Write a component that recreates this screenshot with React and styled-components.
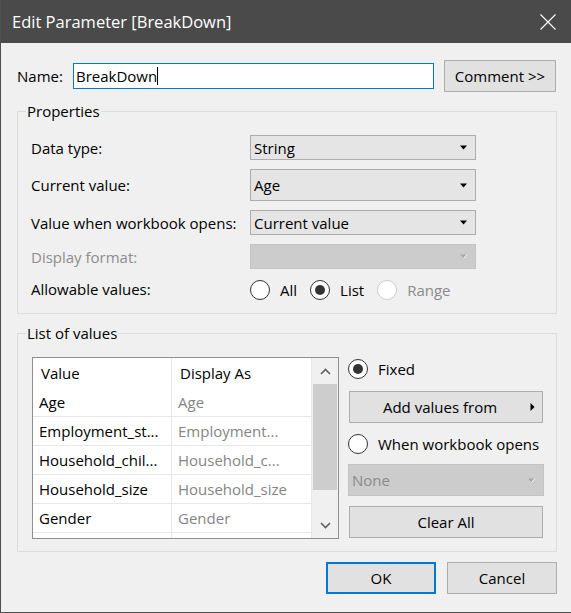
import React from 'react';
import styled, { createGlobalStyle } from 'styled-components';

const GlobalStyle = createGlobalStyle`
  html, body {
    margin: 0;
    padding: 0;
    background: #f0f0f0;
  }
  body {
    font-family: "Open Sans", "Noto Sans", sans-serif;
    font-size: 15px;
    color: #000;
  }
`;

const Window = styled.div`
  width: 571px;
  height: 613px;
  box-sizing: border-box;
  border-left: 1px solid #4f4f4f;
  border-bottom: 1px solid #4f4f4f;
  background: #f0f0f0;
  display: flex;
  flex-direction: column;
`;

const TitleBar = styled.div`
  height: 43px;
  flex: none;
  background: #4a4a4a;
  color: #fff;
  display: flex;
  align-items: center;
  justify-content: space-between;
  padding: 0 15px 0 11px;
  font-size: 16.5px;
`;

const Body = styled.div`
  padding: 17px 14px 0 16px;
`;

const NameRow = styled.div`
  display: flex;
  align-items: center;
  height: 32px;
`;

const NameLabel = styled.label`
  width: 56px;
  flex: none;
`;

const TextInput = styled.div`
  width: 361px;
  height: 26px;
  box-sizing: border-box;
  border: 1px solid #0078d7;
  background: #fff;
  padding-left: 2px;
  display: flex;
  align-items: center;
`;

const Caret = styled.span`
  display: inline-block;
  width: 1px;
  height: 18px;
  background: #000;
`;

const Button = styled.button`
  box-sizing: border-box;
  width: ${(p) => p.$width || 110}px;
  height: 32px;
  margin: 0;
  margin-left: ${(p) => p.$indent || 0}px;
  padding: 0;
  background: #e1e1e1;
  border: ${(p) => (p.$default ? '2px solid #0078d7' : '1px solid #adadad')};
  font: inherit;
  color: #000;
  display: flex;
  align-items: center;
  justify-content: center;
`;

const ButtonText = styled.span`
  flex: 1;
  text-align: center;
`;

const Group = styled.fieldset`
  margin: ${(p) => p.$gap}px 0 0;
  padding: 0;
  min-width: 0;
  border: 1px solid #dcdcdc;
`;

const Legend = styled.legend`
  margin-left: 8px;
  padding: 0 1px;
  line-height: 20px;
`;

const PropGrid = styled.div`
  display: grid;
  grid-template-columns: 219px 226px;
  row-gap: 9px;
  align-items: center;
  padding: 14px 0 13px 13px;
`;

const FieldLabel = styled.div`
  color: ${(p) => (p.$disabled ? '#8d8d8d' : '#000')};
`;

const Select = styled.div`
  box-sizing: border-box;
  width: ${(p) => p.$width || 226}px;
  height: ${(p) => p.$height || 25}px;
  border: 1px solid ${(p) => (p.$disabled ? '#c4c4c4' : '#acacac')};
  background: ${(p) => (p.$disabled ? '#cccccc' : '#e5e5e5')};
  color: ${(p) => (p.$disabled ? '#8a8a8a' : '#000')};
  display: flex;
  align-items: center;
  justify-content: space-between;
  padding: 0 7px 0 3px;
`;

const RadioGroup = styled.div`
  display: flex;
  align-items: center;
  gap: 13px;
  margin-top: 2px;
`;

const RadioItem = styled.label`
  display: flex;
  align-items: center;
  gap: 10px;
  height: ${(p) => p.$height || 20}px;
  color: ${(p) => (p.$disabled ? '#8a8a8a' : '#000')};
`;

const RadioCircle = styled.span`
  box-sizing: border-box;
  width: 20px;
  height: 20px;
  border-radius: 50%;
  border: 1px solid ${(p) => (p.$disabled ? '#cccccc' : '#333')};
  background: #fff;
  display: flex;
  align-items: center;
  justify-content: center;
  flex: none;
  &::after {
    content: '';
    width: 10px;
    height: 10px;
    border-radius: 50%;
    background: #333;
    display: ${(p) => (p.$checked ? 'block' : 'none')};
  }
`;

const ListArea = styled.div`
  display: flex;
  gap: 9px;
  padding: 14px 12px 12px 14px;
`;

const ListBox = styled.div`
  box-sizing: border-box;
  width: 307px;
  height: 182px;
  border: 1px solid #8f8f8f;
  background: #fff;
  display: flex;
  overflow: hidden;
`;

const Table = styled.div`
  flex: 1;
  display: flex;
  flex-direction: column;
`;

const Row = styled.div`
  display: grid;
  grid-template-columns: 139px 140px;
  flex: none;
  height: ${(p) => (p.$header ? 30 : 29)}px;
  box-sizing: border-box;
  border-bottom: ${(p) => (p.$header ? 'none' : '1px solid #e8e8e8')};
`;

const Cell = styled.div`
  box-sizing: border-box;
  border-right: 1px solid #e8e8e8;
  padding-left: ${(p) => (p.$header ? 8 : 6)}px;
  display: flex;
  align-items: center;
  white-space: nowrap;
  overflow: hidden;
  color: ${(p) => (p.$muted ? '#858585' : '#000')};
`;

const ScrollBar = styled.div`
  width: 26px;
  flex: none;
  background: #f0f0f0;
  display: flex;
  flex-direction: column;
`;

const ScrollArrow = styled.div`
  height: 26px;
  flex: none;
  display: flex;
  align-items: center;
  justify-content: center;
`;

const ScrollTrack = styled.div`
  flex: 1;
  padding: 0 1px;
`;

const Thumb = styled.div`
  height: 106px;
  background: #cdcdcd;
`;

const SideColumn = styled.div`
  width: 196px;
  display: flex;
  flex-direction: column;
`;

const Spaced = styled.div`
  margin-top: ${(p) => p.$top}px;
`;

const Footer = styled.div`
  display: flex;
  justify-content: flex-end;
  gap: 11px;
  margin-top: 10px;
`;

const DownArrow = ({ disabled }) => (
  <svg width="8" height="5" viewBox="0 0 8 5">
    <path d="M0 0.5 L7 0.5 L3.5 4.5 Z" fill={disabled ? '#a9a9a9' : '#000'} />
    {disabled && <path d="M7 0.5 L3.5 4.5" stroke="#fff" strokeWidth="1" />}
  </svg>
);

const RightArrow = () => (
  <svg width="5" height="8" viewBox="0 0 5 8" style={{ marginRight: 7 }}>
    <path d="M0.5 0 L4.5 4 L0.5 8 Z" fill="#000" />
  </svg>
);

const Chevron = ({ up }) => (
  <svg width="11" height="7" viewBox="0 0 11 7">
    <path
      d={up ? 'M1 6 L5.5 1.5 L10 6' : 'M1 1 L5.5 5.5 L10 1'}
      fill="none"
      stroke="#606060"
      strokeWidth="1.6"
    />
  </svg>
);

const CloseIcon = () => (
  <svg width="16" height="16" viewBox="0 0 16 16">
    <path d="M0.5 0.5 L15.5 15.5 M15.5 0.5 L0.5 15.5" stroke="#fff" strokeWidth="1.1" />
  </svg>
);

const Radio = ({ label, checked, disabled, height }) => (
  <RadioItem $disabled={disabled} $height={height}>
    <RadioCircle $checked={checked} $disabled={disabled} />
    {label}
  </RadioItem>
);

const values = [
  ['Age', 'Age'],
  ['Employment_st...', 'Employment...'],
  ['Household_chil...', 'Household_c...'],
  ['Household_size', 'Household_size'],
  ['Gender', 'Gender'],
  ['', ''],
];

export default function App() {
  return (
    <Window>
      <GlobalStyle />
      <TitleBar>
        <span>Edit Parameter [BreakDown]</span>
        <CloseIcon />
      </TitleBar>
      <Body>
        <NameRow>
          <NameLabel>Name:</NameLabel>
          <TextInput>
            BreakDown
            <Caret />
          </TextInput>
          <Button $width={112} $indent={10}>Comment &gt;&gt;</Button>
        </NameRow>

        <Group $gap={9}>
          <Legend>Properties</Legend>
          <PropGrid>
            <FieldLabel>Data type:</FieldLabel>
            <Select>
              String
              <DownArrow />
            </Select>
            <FieldLabel>Current value:</FieldLabel>
            <Select $height={32}>
              Age
              <DownArrow />
            </Select>
            <FieldLabel>Value when workbook opens:</FieldLabel>
            <Select>
              Current value
              <DownArrow />
            </Select>
            <FieldLabel $disabled>Display format:</FieldLabel>
            <Select $disabled>
              <span />
              <DownArrow disabled />
            </Select>
            <FieldLabel>Allowable values:</FieldLabel>
            <RadioGroup>
              <Radio label="All" />
              <Radio label="List" checked />
              <Radio label="Range" disabled />
            </RadioGroup>
          </PropGrid>
        </Group>

        <Group $gap={9}>
          <Legend>List of values</Legend>
          <ListArea>
            <ListBox>
              <Table>
                <Row $header>
                  <Cell $header>Value</Cell>
                  <Cell $header>Display As</Cell>
                </Row>
                {values.map(([v, d], i) => (
                  <Row key={i}>
                    <Cell>{v}</Cell>
                    <Cell $muted>{d}</Cell>
                  </Row>
                ))}
              </Table>
              <ScrollBar>
                <ScrollArrow>
                  <Chevron up />
                </ScrollArrow>
                <ScrollTrack>
                  <Thumb />
                </ScrollTrack>
                <ScrollArrow>
                  <Chevron />
                </ScrollArrow>
              </ScrollBar>
            </ListBox>
            <SideColumn>
              <Radio label="Fixed" checked height={24} />
              <Spaced $top={10}>
                <Button $width={194} $indent={1}>
                  <ButtonText>Add values from</ButtonText>
                  <RightArrow />
                </Button>
              </Spaced>
              <Spaced $top={9}>
                <Radio label="When workbook opens" height={24} />
              </Spaced>
              <Spaced $top={8}>
                <Select $disabled $width={196} $height={32}>
                  None
                  <DownArrow disabled />
                </Select>
              </Spaced>
              <Spaced $top={10}>
                <Button $width={194} $indent={1}>Clear All</Button>
              </Spaced>
            </SideColumn>
          </ListArea>
        </Group>

        <Footer>
          <Button $default>OK</Button>
          <Button>Cancel</Button>
        </Footer>
      </Body>
    </Window>
  );
}
